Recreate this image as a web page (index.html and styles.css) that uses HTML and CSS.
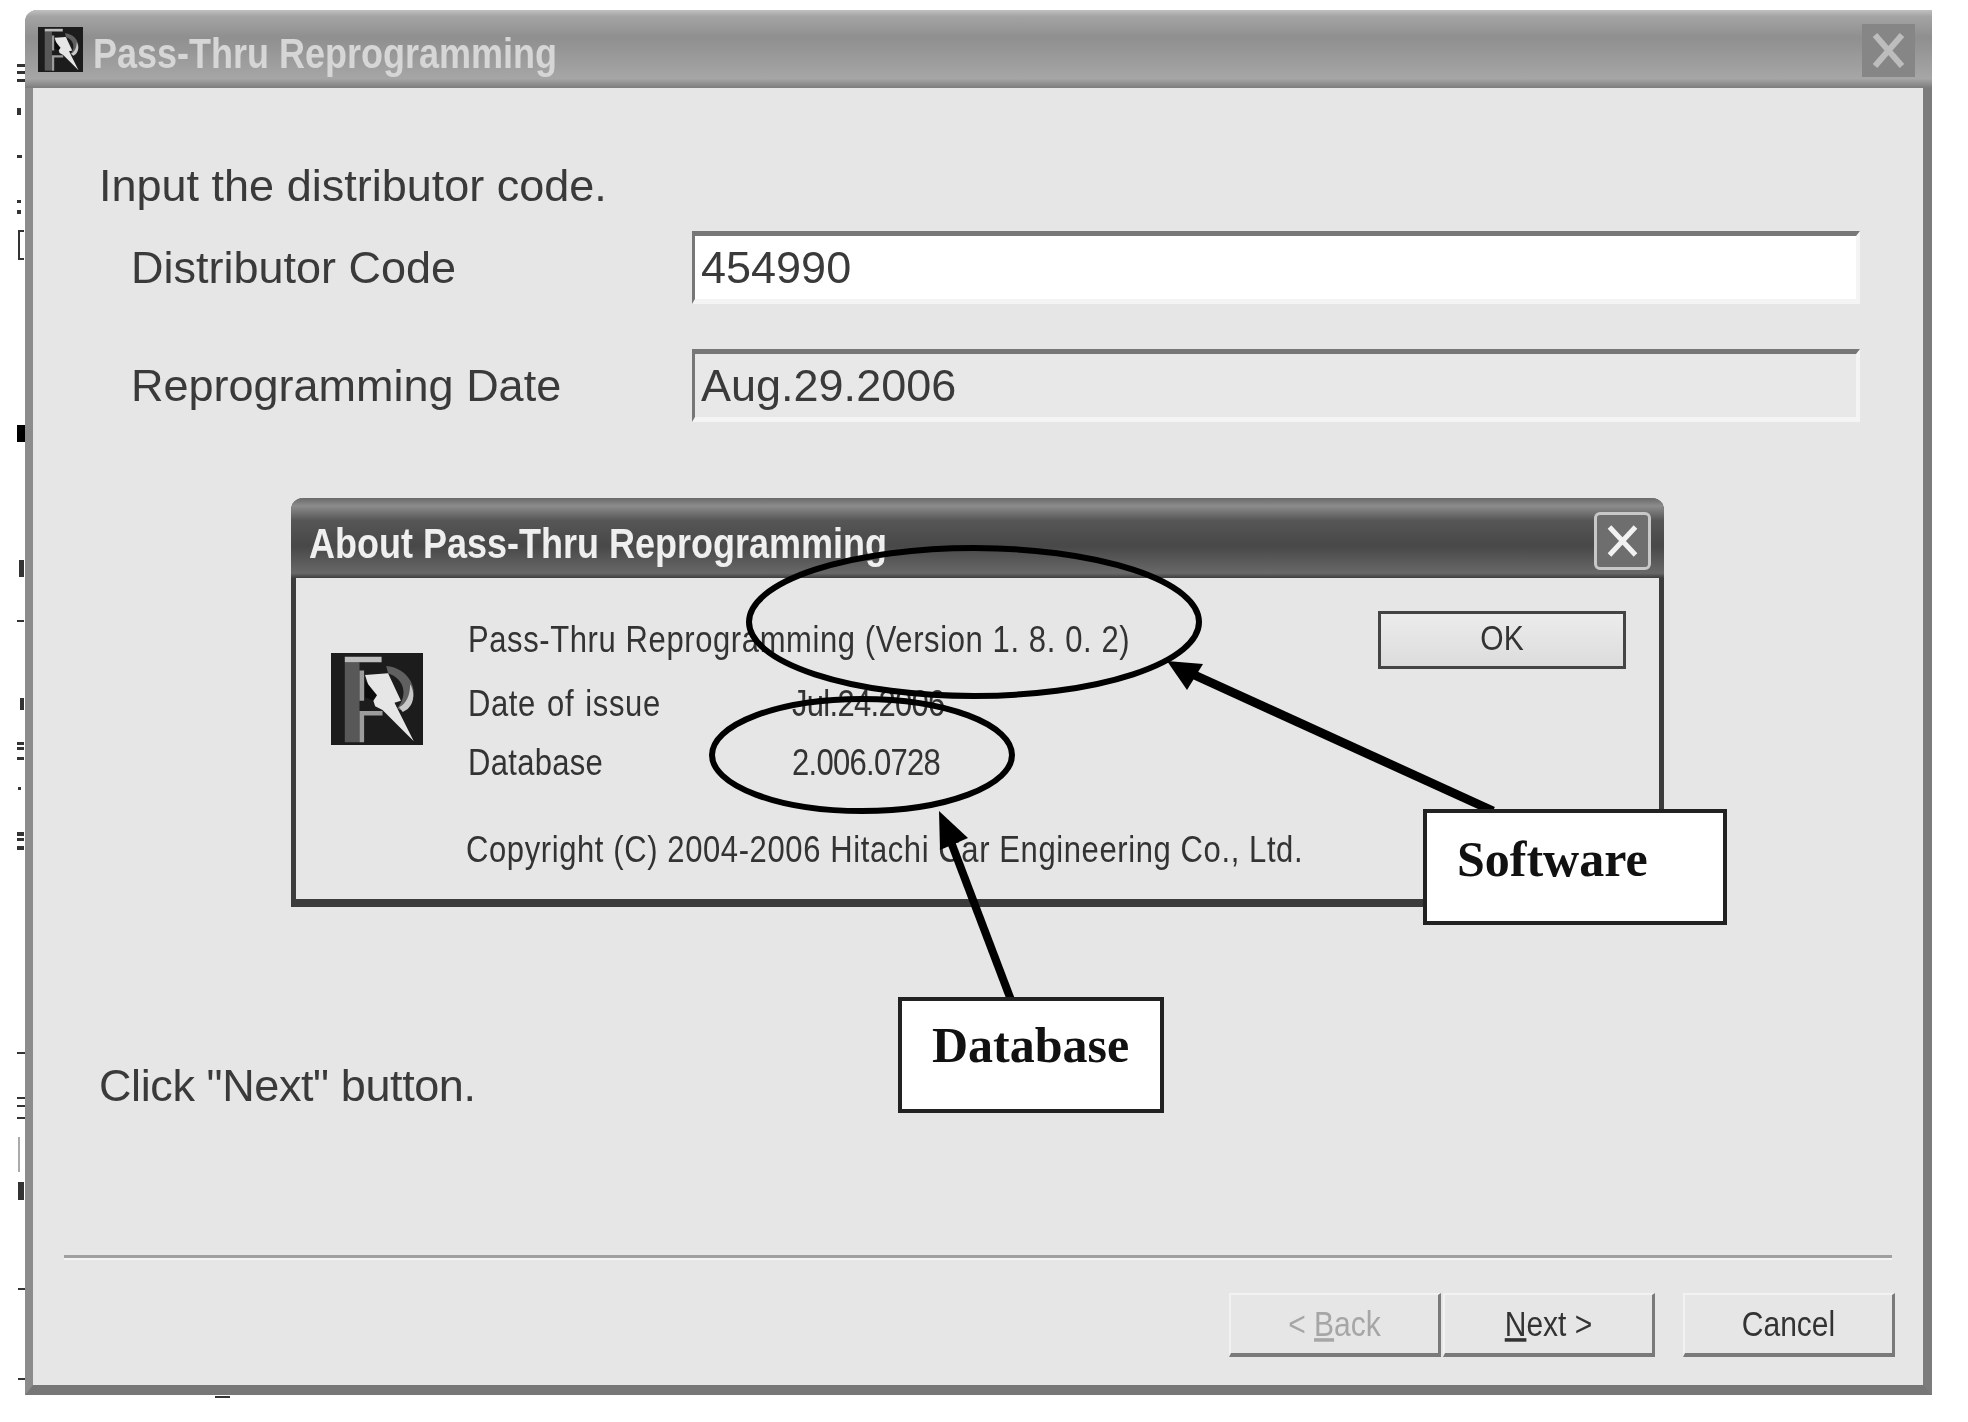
FILE: index.html
```html
<!DOCTYPE html>
<html lang="en">
<head>
    <meta charset="UTF-8">
    <title>Pass-Thru Reprogramming</title>
    <link rel="stylesheet" href="styles.css">
</head>
<body>
    <svg class="hidden" width="0" height="0">
        <symbol id="logo" viewBox="0 0 100 100">
            <rect width="100" height="100" fill="#1c1c1c"/>
            <path d="M15 10H31V97H15Z" fill="#585858"/>
            <path d="M15 4H55V10H15Z" fill="#bdbdbd"/>
            <path d="M31 19H36V52H31ZM31 63H56V68H36V97H31Z" fill="#9c9c9c"/>
            <path d="M60 14C84 16 98 40 85 58C81 63 76 63 72 60C84 46 80 28 62 22Z" fill="#606060"/>
            <path d="M86 34C93 46 89 60 78 64L74 59C82 55 86 46 86 34Z" fill="#c8c8c8"/>
            <path d="M37 24L62 22L76 52L69 54L90 96L56 62L48 58Z" fill="#e6e6e6"/>
            <path d="M37 30L50 46L46 52L37 48Z" fill="#0c0c0c"/>
        </symbol>
    </svg>

    <div class="window">
        <div class="titlebar">
            <svg class="title-icon"><use href="#logo"/></svg>
            <span class="title-text">Pass-Thru Reprogramming</span>
            <div class="close">
                <svg viewBox="0 0 53 53"><path d="M13 11L40 42M40 11L13 42" stroke="#bdbdbd" stroke-width="6"/></svg>
            </div>
        </div>
        <div class="content">
            <div class="heading">Input the distributor code.</div>
            <div class="field first">
                <label>Distributor Code</label>
                <div class="input">454990</div>
            </div>
            <div class="field second">
                <label>Reprogramming Date</label>
                <div class="input readonly">Aug.29.2006</div>
            </div>

            <div class="dialog">
                <div class="dialog-title">
                    <span class="dialog-text">About Pass-Thru Reprogramming</span>
                    <div class="dialog-close">
                        <svg viewBox="0 0 50 52"><path d="M12 12L38 40M38 12L12 40" stroke="#f2f2f2" stroke-width="5"/></svg>
                    </div>
                </div>
                <div class="dialog-body">
                    <div class="about-top">
                        <svg class="about-logo"><use href="#logo"/></svg>
                        <div class="about-info">
                            <div class="about-row"><span class="tall">Pass-Thru Reprogramming (Version 1. 8. 0. 2)</span></div>
                            <div class="about-row date"><span class="tall name">Date of issue</span><span class="tall value">Jul.24.2006</span></div>
                            <div class="about-row db"><span class="tall name">Database</span><span class="tall value">2.006.0728</span></div>
                        </div>
                        <button class="ok"><span class="tall">OK</span></button>
                    </div>
                    <div class="copyright"><span class="tall">Copyright (C) 2004-2006 Hitachi Car Engineering Co., Ltd.</span></div>
                </div>
            </div>

            <div class="heading click">Click "Next" button.</div>
        </div>
        <div class="footer">
            <div class="sep"></div>
            <div class="buttons">
                <button class="btn disabled"><span class="tall">&lt; <u>B</u>ack</span></button>
                <button class="btn"><span class="tall"><u>N</u>ext &gt;</span></button>
                <button class="btn cancel"><span class="tall">Cancel</span></button>
            </div>
        </div>
    </div>

    <!-- annotations drawn on top of the screenshot -->
    <svg class="marks" viewBox="0 0 1968 1422">
        <ellipse cx="974" cy="622" rx="225" ry="74" fill="none" stroke="#000" stroke-width="6"/>
        <ellipse cx="862" cy="755" rx="150" ry="56" fill="none" stroke="#000" stroke-width="6"/>
        <path d="M1493 811L1190 673" stroke="#000" stroke-width="9"/>
        <path d="M1167 661L1203 664L1187 690Z" fill="#000"/>
        <path d="M1011 1000L951 842" stroke="#000" stroke-width="8"/>
        <path d="M939 811L968 838L940 850Z" fill="#000"/>
        <!-- bits of the window behind, left of the frame -->
        <g fill="#333">
            <rect x="17" y="64" width="8" height="3"/>
            <rect x="17" y="71" width="8" height="3"/>
            <rect x="17" y="79" width="8" height="3"/>
            <rect x="17" y="108" width="4" height="7"/>
            <rect x="17" y="155" width="5" height="3"/>
            <rect x="17" y="200" width="4" height="3"/>
            <rect x="17" y="210" width="4" height="4"/>
            <path d="M24 230H18V260H24V258H20V232H24Z"/>
            <rect x="17" y="425" width="8" height="17" fill="#000"/>
            <rect x="19" y="560" width="5" height="17"/>
            <rect x="17" y="620" width="7" height="2"/>
            <rect x="20" y="698" width="4" height="12"/>
            <rect x="17" y="742" width="7" height="3"/>
            <rect x="17" y="747" width="7" height="3"/>
            <rect x="17" y="757" width="7" height="3"/>
            <rect x="18" y="787" width="3" height="3"/>
            <rect x="17" y="832" width="7" height="4"/>
            <rect x="17" y="838" width="7" height="3"/>
            <rect x="17" y="846" width="7" height="4"/>
            <rect x="17" y="1052" width="8" height="2"/>
            <rect x="17" y="1097" width="8" height="2"/>
            <rect x="17" y="1105" width="8" height="2"/>
            <rect x="17" y="1117" width="8" height="2"/>
            <rect x="18" y="1137" width="2" height="35" fill="#aaa"/>
            <rect x="18" y="1182" width="6" height="18"/>
            <rect x="18" y="1288" width="7" height="2"/>
            <rect x="18" y="1378" width="7" height="2"/>
            <rect x="215" y="1396" width="15" height="2"/>
        </g>
    </svg>
    <div class="callout software">Software</div>
    <div class="callout database">Database</div>
</body>
</html>
```

FILE: styles.css
```css
html, body {
    margin: 0;
    padding: 0;
    background: #fff;
}
body {
    position: relative;
    width: 1968px;
    height: 1422px;
    overflow: hidden;
    font-family: "Liberation Sans", Arial, sans-serif;
    color: #333;
    filter: blur(0.6px);
}
.hidden {
    position: absolute;
}
.tall {
    display: inline-block;
    transform: scaleY(1.18);
}
.window {
    position: absolute;
    left: 25px;
    top: 10px;
    width: 1907px;
    height: 1385px;
    box-sizing: border-box;
    display: flex;
    flex-direction: column;
    background: #e6e6e6;
    border-left: 8px solid #8c8c8c;
    border-right: 9px solid #7c7c7c;
    border-bottom: 10px solid #777;
    border-radius: 12px 0 0 0;
}
.titlebar {
    height: 78px;
    margin-left: -8px;
    margin-right: -9px;
    display: flex;
    align-items: center;
    padding: 0 17px 0 13px;
    border-radius: 12px 0 0 0;
    background: linear-gradient(#c0c0c0 0, #a4a4a4 8%, #8f8f8f 35%, #a6a6a6 88%, #7c7c7c 100%);
}
.title-icon {
    width: 45px;
    height: 45px;
    margin-right: 10px;
}
.title-text {
    flex: 1;
    margin-top: 10px;
    font-size: 36px;
    font-weight: bold;
    color: #d6d6d6;
    transform: scaleY(1.2);
}
.close {
    width: 53px;
    height: 53px;
    margin-top: 3px;
    background: #868686;
}
.close svg, .dialog-close svg {
    display: block;
    width: 100%;
    height: 100%;
}
.content {
    flex: 1;
    padding: 73px 63px 0 66px;
}
.heading {
    font-size: 45px;
    line-height: 50px;
    color: #3a3a3a;
}
.field {
    display: flex;
    align-items: center;
    padding-left: 32px;
    font-size: 45px;
    line-height: 50px;
    color: #3a3a3a;
}
.field.first {
    margin-top: 20px;
}
.field.second {
    margin-top: 45px;
}
.field label {
    width: 561px;
}
.input {
    flex: 1;
    height: 73px;
    box-sizing: border-box;
    padding: 7px 0 0 6px;
    background: #fff;
    border-top: 5px solid #777;
    border-left: 3px solid #777;
    border-right: 4px solid #f4f4f4;
    border-bottom: 5px solid #f4f4f4;
}
.input.readonly {
    background: #e8e8e8;
}
.dialog {
    width: 1373px;
    height: 409px;
    box-sizing: border-box;
    margin: 76px 0 0 192px;
    background: #e6e6e6;
    border-left: 5px solid #3c3c3c;
    border-right: 5px solid #3c3c3c;
    border-bottom: 8px solid #3c3c3c;
    border-radius: 12px 12px 0 0;
}
.dialog-title {
    height: 80px;
    margin: 0 -5px;
    padding: 0 13px 0 18px;
    display: flex;
    align-items: center;
    justify-content: space-between;
    border-radius: 12px 12px 0 0;
    background: linear-gradient(#6a6a6a 0, #8c8c8c 10%, #565656 28%, #484848 60%, #686868 94%, #3e3e3e 100%);
    color: #efefef;
    font-size: 36px;
    font-weight: bold;
}
.dialog-text {
    margin-top: 11px;
    transform: scaleY(1.2);
}
.dialog-close {
    width: 57px;
    height: 58px;
    margin-top: 6px;
    box-sizing: border-box;
    border: 3px solid #c8c8c8;
    border-radius: 6px;
    background: #6e6e6e;
}
.dialog-body {
    padding-top: 33px;
}
.about-top {
    display: flex;
    align-items: flex-start;
}
.about-logo {
    width: 92px;
    height: 92px;
    margin: 42px 0 0 35px;
}
.about-info {
    width: 910px;
    margin: 9px 0 0 45px;
    font-size: 31px;
    line-height: 40px;
    letter-spacing: 0.6px;
}
.about-row.date {
    display: flex;
    margin-top: 24px;
    word-spacing: 2px;
}
.about-row.db {
    display: flex;
    margin-top: 19px;
    letter-spacing: 0.3px;
}
.about-row .name {
    width: 326px;
    transform-origin: left center;
}
.about-row .value {
    margin-left: -2px;
    letter-spacing: -0.7px;
}
.ok {
    width: 248px;
    height: 58px;
    padding-bottom: 5px;
    background: linear-gradient(#ececec, #dcdcdc);
    border: 3px solid #444;
    font: 30px "Liberation Sans", Arial, sans-serif;
    color: #333;
}
.copyright {
    margin: 47px 0 0 170px;
    font-size: 31px;
    line-height: 40px;
    letter-spacing: 0.6px;
}
.heading.click {
    margin-top: 154px;
    letter-spacing: -0.4px;
}
.footer {
    padding: 0 28px 28px 31px;
}
.sep {
    height: 3px;
    margin-right: 3px;
    background: #a0a0a0;
    border-bottom: 2px solid #f4f4f4;
}
.buttons {
    display: flex;
    justify-content: flex-end;
    margin-top: 33px;
}
.btn {
    width: 212px;
    height: 64px;
    margin-left: 2px;
    box-sizing: border-box;
    background: #e6e6e6;
    border: none;
    border-top: 2px solid #f2f2f2;
    border-left: 2px solid #f2f2f2;
    border-right: 3px solid #7a7a7a;
    border-bottom: 4px solid #7a7a7a;
    font: 30px "Liberation Sans", Arial, sans-serif;
    color: #333;
}
.btn.disabled {
    color: #a6a6a6;
}
.btn.cancel {
    margin-left: 28px;
}
.marks {
    position: absolute;
    left: 0;
    top: 0;
    width: 1968px;
    height: 1422px;
}
.callout {
    position: absolute;
    box-sizing: border-box;
    background: #fff;
    border: 4px solid #222;
    color: #111;
    font-family: "Liberation Serif", "Times New Roman", serif;
    font-weight: bold;
    font-size: 50px;
    line-height: 52px;
}
.callout.software {
    left: 1423px;
    top: 809px;
    width: 304px;
    height: 116px;
    padding: 20px 0 0 30px;
}
.callout.database {
    left: 898px;
    top: 997px;
    width: 266px;
    height: 116px;
    padding: 18px 0 0 30px;
}
```
